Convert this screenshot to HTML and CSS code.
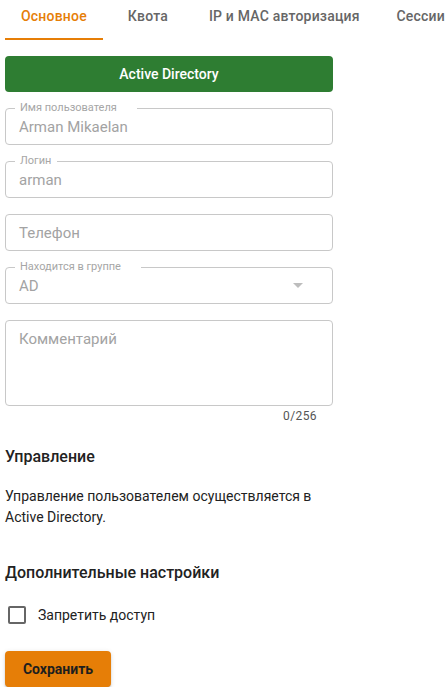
FILE: index.html
```html
<!DOCTYPE html>
<html lang="ru">
<head>
<meta charset="utf-8">
<link rel="stylesheet" href="styles.css">
</head>
<body>
<div class="tabs">
  <div class="tab active">Основное</div>
  <div class="tab">Квота</div>
  <div class="tab">IP и MAC авторизация</div>
  <div class="tab">Сессии</div>
</div>
<div class="content">
  <button class="btn-ad">Active Directory</button>
  <div class="form">
    <div class="field disabled">
      <span class="field-label notch-name">Имя пользователя</span>
      <span class="field-value">Arman Mikaelan</span>
    </div>
    <div class="field disabled">
      <span class="field-label notch-login">Логин</span>
      <span class="field-value">arman</span>
    </div>
    <div class="field">
      <span class="field-value placeholder">Телефон</span>
    </div>
    <div class="field disabled select">
      <span class="field-label notch-group">Находится в группе</span>
      <span class="field-value">AD</span>
      <svg class="arrow" width="10" height="5" viewBox="0 0 10 5"><path d="M0 0 L10 0 L5 5 Z" fill="#bdbdbd"/></svg>
    </div>
    <div class="field textarea">
      <span class="field-value placeholder">Комментарий</span>
    </div>
  </div>
  <div class="counter">0/256</div>
  <h2 class="section-title">Управление</h2>
  <p class="section-text">Управление пользователем осуществляется в Active Directory.</p>
  <h2 class="section-title second">Дополнительные настройки</h2>
  <label class="check-row">
    <span class="checkbox"></span>
    <span class="check-label">Запретить доступ</span>
  </label>
  <button class="btn-save">Сохранить</button>
</div>
</body>
</html>
```
FILE: styles.css
```css
html, body {
  margin: 0;
  padding: 0;
  background: #fff;
}
body {
  font-family: Roboto, "Noto Sans", sans-serif;
  color: #222;
  width: 447px;
  overflow: hidden;
}
.tabs {
  display: flex;
  padding-left: 5px;
  height: 40px;
  white-space: nowrap;
  overflow: hidden;
}
.tab {
  flex: none;
  min-width: 90px;
  box-sizing: border-box;
  padding: 6px 16px 0;
  text-align: center;
  font-size: 14px;
  line-height: 20px;
  font-weight: 500;
  letter-spacing: 0.2px;
  color: #666;
  height: 40px;
  border-bottom: 2px solid transparent;
}
.tab.active {
  color: #e67e07;
  border-bottom-color: #e67e07;
}
.content {
  padding: 16px 0 0 5px;
  width: 328px;
}
.btn-ad {
  display: block;
  width: 328px;
  height: 36px;
  border: none;
  border-radius: 4px;
  background: #2e7d32;
  color: #fff;
  font-family: Roboto, sans-serif;
  font-size: 14px;
  font-weight: 500;
  cursor: pointer;
}
.form {
  display: flex;
  flex-direction: column;
  gap: 16px;
  margin-top: 16px;
}
.field {
  position: relative;
  box-sizing: border-box;
  height: 37px;
  border: 1px solid #c8c8c8;
  border-radius: 4px;
  display: flex;
  align-items: center;
  padding: 0 13px;
}
.field-label {
  position: absolute;
  top: -7px;
  left: 9px;
  padding: 0 5px;
  background: #fff;
  font-size: 11px;
  line-height: 12px;
  color: #a6a6a6;
}
.notch-name { padding-right: 20px; }
.notch-login { padding-right: 6px; }
.notch-group { padding-right: 20px; }
.field-value {
  font-size: 15px;
  color: #a3a3a3;
}
.field-value.placeholder {
  color: #a3a3a3;
}
.select .arrow {
  margin-left: auto;
  margin-right: 16px;
}
.textarea {
  height: 86px;
  align-items: flex-start;
  padding-top: 9px;
}
.counter {
  text-align: right;
  padding-right: 16px;
  font-size: 12px;
  line-height: 14px;
  margin-top: 3px;
  color: #555;
  letter-spacing: 0.4px;
}
.section-title {
  margin: 22px 0 0;
  font-size: 16px;
  line-height: 24px;
  font-weight: 500;
  color: #222;
}
.section-title.second {
  margin-top: 33px;
}
.section-text {
  margin: 17px 0 0;
  font-size: 14px;
  line-height: 21px;
  color: #222;
}
.check-row {
  display: flex;
  align-items: center;
  height: 40px;
  margin-top: 10px;
  gap: 12px;
  padding-left: 3px;
}
.checkbox {
  width: 18px;
  height: 18px;
  box-sizing: border-box;
  border: 2px solid #666;
  border-radius: 2px;
}
.check-label {
  font-size: 14px;
  color: #222;
}
.btn-save {
  display: block;
  margin-top: 16px;
  width: 106px;
  height: 36px;
  border: none;
  border-radius: 4px;
  background: #e67e07;
  color: #1e1e1e;
  font-family: Roboto, sans-serif;
  font-size: 14px;
  font-weight: 700;
  box-shadow: 0 3px 1px -2px rgba(0,0,0,0.2), 0 2px 2px 0 rgba(0,0,0,0.14), 0 1px 5px 0 rgba(0,0,0,0.12);
}
```
